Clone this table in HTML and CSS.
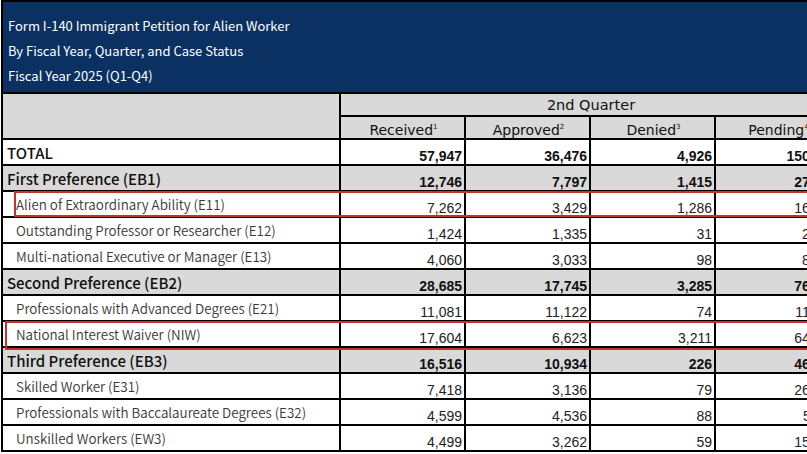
FILE: index.html
```html
<!DOCTYPE html>
<html>
<head>
<meta charset="utf-8">
<link rel="stylesheet" href="styles.css">
</head>
<body>
<div class="sheet">
  <div class="banner">
    <div>Form I-140 Immigrant Petition for Alien Worker</div>
    <div>By Fiscal Year, Quarter, and Case Status</div>
    <div>Fiscal Year 2025 (Q1-Q4)</div>
  </div>
  <table class="grid">
    <colgroup>
      <col class="c-label"><col class="c-num"><col class="c-num"><col class="c-num"><col class="c-num">
    </colgroup>
    <thead>
      <tr class="h1"><th rowspan="2" class="blank"></th><th colspan="4">2nd Quarter</th></tr>
      <tr class="h2"><th>Received<sup>1</sup></th><th>Approved<sup>2</sup></th><th>Denied<sup>3</sup></th><th>Pending<sup>4</sup></th></tr>
    </thead>
    <tbody>
      <tr class="total"><td class="lbl">TOTAL</td><td>57,947</td><td>36,476</td><td>4,926</td><td>150,155</td></tr>
      <tr class="cat"><td class="lbl">First Preference (EB1)</td><td>12,746</td><td>7,797</td><td>1,415</td><td>27,310</td></tr>
      <tr class="sub"><td class="lbl">Alien of Extraordinary Ability (E11)</td><td>7,262</td><td>3,429</td><td>1,286</td><td>16,220</td></tr>
      <tr class="sub"><td class="lbl">Outstanding Professor or Researcher (E12)</td><td>1,424</td><td>1,335</td><td>31</td><td>2,470</td></tr>
      <tr class="sub"><td class="lbl">Multi-national Executive or Manager (E13)</td><td>4,060</td><td>3,033</td><td>98</td><td>8,620</td></tr>
      <tr class="cat"><td class="lbl">Second Preference (EB2)</td><td>28,685</td><td>17,745</td><td>3,285</td><td>76,015</td></tr>
      <tr class="sub"><td class="lbl">Professionals with Advanced Degrees (E21)</td><td>11,081</td><td>11,122</td><td>74</td><td>11,430</td></tr>
      <tr class="sub"><td class="lbl">National Interest Waiver (NIW)</td><td>17,604</td><td>6,623</td><td>3,211</td><td>64,585</td></tr>
      <tr class="cat"><td class="lbl">Third Preference (EB3)</td><td>16,516</td><td>10,934</td><td>226</td><td>46,830</td></tr>
      <tr class="sub"><td class="lbl">Skilled Worker (E31)</td><td>7,418</td><td>3,136</td><td>79</td><td>26,140</td></tr>
      <tr class="sub"><td class="lbl">Professionals with Baccalaureate Degrees (E32)</td><td>4,599</td><td>4,536</td><td>88</td><td>5,110</td></tr>
      <tr class="sub"><td class="lbl">Unskilled Workers (EW3)</td><td>4,499</td><td>3,262</td><td>59</td><td>15,580</td></tr>
    </tbody>
  </table>
  <div class="mark mark-e11"></div>
  <div class="mark mark-niw"></div>
</div>
</body>
</html>
```
FILE: styles.css
```css
html, body {
  margin: 0;
  padding: 0;
  background: #ffffff;
  overflow: hidden;
  width: 807px;
  height: 454px;
}
.sheet {
  position: relative;
  width: 840px;
  margin-left: 1px;
}
.banner {
  background: #0b3162;
  color: #ffffff;
  border: 2px solid #000;
  border-bottom: none;
  height: 92px;
  box-sizing: border-box;
  padding: 11px 0 0 5px;
  font-family: "Noto Sans CJK SC", "Noto Sans", sans-serif;
  font-size: 13px;
  line-height: 25px;
}
.grid {
  border-collapse: collapse;
  table-layout: fixed;
  width: 839px;
  border: 2px solid #000;
  font-family: "Liberation Sans", Arial, sans-serif;
  font-size: 14px;
  color: #111;
}
.c-label { width: 338px; }
.c-num { width: 125px; }
.grid th, .grid td {
  border: 2px solid #000;
  padding: 0 2px 0 4px;
  white-space: nowrap;
  overflow: hidden;
}
.grid th {
  background: #d9d9d9;
  font-family: "DejaVu Sans", Verdana, sans-serif;
  font-weight: normal;
  font-size: 14px;
  text-align: center;
  color: #111;
}
.h1 th { height: 21px; font-size: 14.5px; }
.h2 th { height: 21px; vertical-align: bottom; }
.grid sup {
  font-size: 7px;
  vertical-align: 6px;
  line-height: 0;
}
.grid td {
  height: 24px;
  text-align: right;
  vertical-align: bottom;
  padding-bottom: 0;
}
.grid td.lbl {
  text-align: left;
  vertical-align: middle;
  font-family: "Noto Sans CJK SC", "Noto Sans", sans-serif;
  font-size: 15px;
  padding-left: 4px;
}
.total td, .cat td {
  font-weight: bold;
}
.total td.lbl, .cat td.lbl {
  font-weight: 500;
  color: #111;
}
.total td { background: #ffffff; }
.cat td { background: #d9d9d9; }
.sub td {
  background: #ffffff;
  color: #222;
}
.sub td.lbl {
  padding-left: 13px;
  font-size: 13.4px;
  font-weight: 350;
  color: #3a3a3a;
}
.mark {
  position: absolute;
  border: 2px solid #c9302c;
  width: 900px;
  box-sizing: border-box;
  pointer-events: none;
}
.mark-e11 {
  left: 13px;
  top: 191px;
  height: 26px;
}
.mark-niw {
  left: 4px;
  top: 321px;
  height: 29px;
}
```
